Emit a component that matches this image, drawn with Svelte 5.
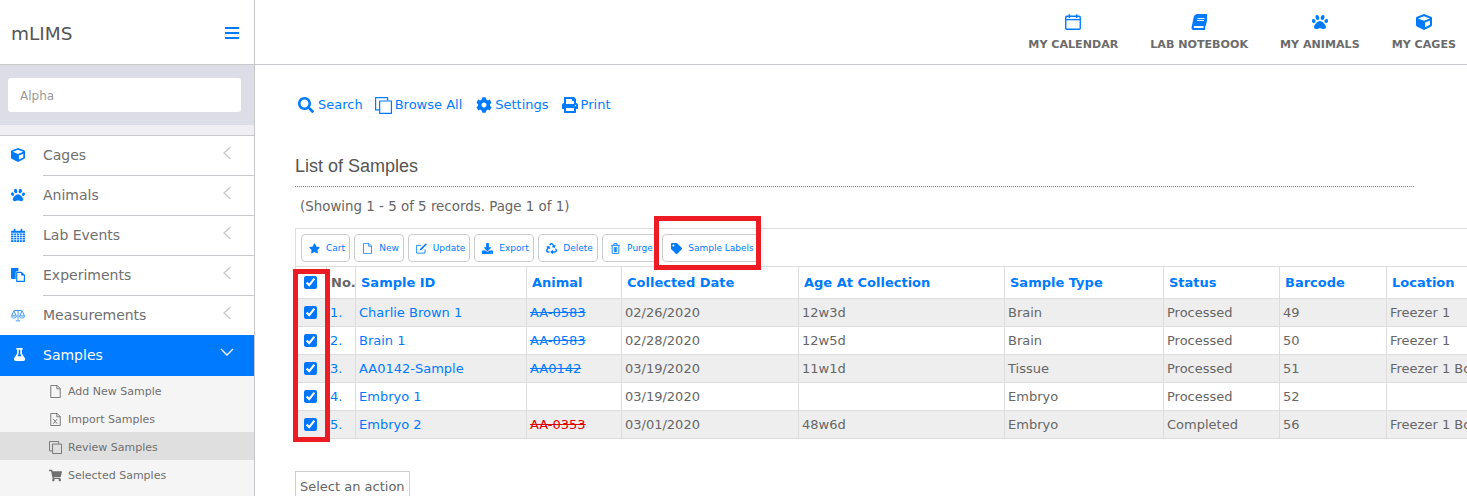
<script>
  const P = {
    search: 'M505 442.7L405.3 343c-4.5-4.5-10.6-7-17-7H372c27.6-35.3 44-79.7 44-128C416 93.1 322.9 0 208 0S0 93.1 0 208s93.1 208 208 208c48.3 0 92.7-16.4 128-44v16.3c0 6.4 2.5 12.5 7 17l99.7 99.7c9.4 9.4 24.6 9.4 33.9 0l28.3-28.3c9.4-9.4 9.4-24.6.1-34zM208 336c-70.7 0-128-57.2-128-128 0-70.7 57.2-128 128-128 70.7 0 128 57.2 128 128 0 70.7-57.2 128-128 128z',
    paw: 'M256 224c-79.41 0-192 122.76-192 200.25 0 34.9 26.81 55.75 71.74 55.75 48.84 0 81.09-25.08 120.26-25.08 39.51 0 71.85 25.08 120.26 25.08 44.93 0 71.74-20.85 71.74-55.75C448 346.76 335.41 224 256 224zm-147.28-12.61c-10.4-34.65-42.44-57.09-71.56-50.13-29.12 6.96-44.29 40.69-33.89 75.34 10.4 34.65 42.44 57.09 71.56 50.13 29.12-6.96 44.29-40.69 33.89-75.34zm84.72-20.78c30.94-8.14 46.42-49.94 34.58-93.36s-46.52-72.01-77.46-63.87-46.42 49.94-34.58 93.36c11.84 43.42 46.51 72.02 77.46 63.87zm281.39-29.34c-29.12-6.96-61.15 15.48-71.56 50.13-10.4 34.65 4.77 68.38 33.89 75.34 29.12 6.96 61.15-15.48 71.56-50.13 10.4-34.65-4.77-68.38-33.89-75.34zm-156.27 29.34c30.94 8.14 65.62-20.45 77.46-63.87 11.84-43.42-3.64-85.21-34.58-93.36s-65.62 20.45-77.46 63.87c-11.84 43.42 3.64 85.22 34.58 93.36z',
    cube: 'M239.1 6.3l-208 78c-18.7 7-31.1 25-31.1 45v225.1c0 18.2 10.3 34.8 26.5 42.9l208 104c13.5 6.8 29.4 6.8 42.9 0l208-104c16.3-8.1 26.5-24.8 26.5-42.9V129.3c0-20-12.4-37.9-31.1-44.9l-208-78C262 2.2 250 2.2 239.1 6.3zM256 68.4l192 72v1.1l-192 78-192-78v-1.1l192-72zm32 356V275.5l160-65v133.9l-160 80z',
    cog: 'M487.4 315.7l-42.6-24.6c4.3-23.2 4.3-47 0-70.2l42.6-24.6c4.9-2.8 7.1-8.6 5.5-14-11.1-35.6-30-67.8-54.7-94.6-3.8-4.1-10-5.1-14.8-2.3L380.8 110c-17.9-15.4-38.5-27.3-60.8-35.1V25.8c0-5.6-3.9-10.5-9.4-11.7-36.7-8.2-74.3-7.8-109.2 0-5.5 1.2-9.4 6.1-9.4 11.7V75c-22.2 7.9-42.8 19.8-60.8 35.1L88.7 85.5c-4.9-2.8-11-1.9-14.8 2.3-24.7 26.7-43.6 58.9-54.7 94.6-1.7 5.4.6 11.2 5.5 14L67.3 221c-4.3 23.2-4.3 47 0 70.2l-42.6 24.6c-4.9 2.8-7.1 8.6-5.5 14 11.1 35.6 30 67.8 54.7 94.6 3.8 4.1 10 5.1 14.8 2.3l42.6-24.6c17.9 15.4 38.5 27.3 60.8 35.1v49.2c0 5.6 3.9 10.5 9.4 11.7 36.7 8.2 74.3 7.8 109.2 0 5.5-1.2 9.4-6.1 9.4-11.7v-49.2c22.2-7.9 42.8-19.8 60.8-35.1l42.6 24.6c4.9 2.8 11 1.9 14.8-2.3 24.7-26.7 43.6-58.9 54.7-94.6 1.5-5.5-.7-11.3-5.6-14.1zM256 336c-44.1 0-80-35.9-80-80s35.9-80 80-80 80 35.9 80 80-35.9 80-80 80z',
    star: 'M259.3 17.8L194 150.2 47.9 171.5c-26.2 3.8-36.7 36.1-17.7 54.6l105.7 103-25 145.5c-4.5 26.3 23.2 46 46.4 33.7L288 439.6l130.7 68.7c23.2 12.2 50.9-7.4 46.4-33.7l-25-145.5 105.7-103c19-18.5 8.5-50.8-17.7-54.6L382 150.2 316.7 17.8c-11.7-23.6-45.6-23.9-57.4 0z',
    tag: 'M0 252.118V48C0 21.49 21.49 0 48 0h204.118a48 48 0 0 1 33.941 14.059l211.882 211.882c18.745 18.745 18.745 49.137 0 67.882L293.823 497.941c-18.745 18.745-49.137 18.745-67.882 0L14.059 286.059A48 48 0 0 1 0 252.118zM112 64c-26.51 0-48 21.49-48 48s21.49 48 48 48 48-21.49 48-48-21.49-48-48-48z',
    cart: 'M528.12 301.319l47.273-208C578.806 78.301 567.391 64 551.99 64H159.208l-9.166-44.81C147.758 8.021 137.93 0 126.529 0H24C10.745 0 0 10.745 0 24v16c0 13.255 10.745 24 24 24h69.883l70.248 343.435C147.325 417.1 136 435.222 136 456c0 30.928 25.072 56 56 56s56-25.072 56-56c0-15.674-6.447-29.835-16.824-40h209.647C430.447 426.165 424 440.326 424 456c0 30.928 25.072 56 56 56s56-25.072 56-56c0-22.172-12.888-41.332-31.579-50.405l5.517-24.276c3.413-15.018-8.002-29.319-23.403-29.319H218.117l-6.545-32h293.145c11.206 0 20.92-7.754 23.403-18.681z',
    download: 'M216 0h80c13.3 0 24 10.7 24 24v168h87.7c17.8 0 26.7 21.5 14.1 34.1L269.7 378.3c-7.5 7.5-19.8 7.5-27.3 0L90.1 226.1c-12.6-12.6-3.7-34.1 14.1-34.1H192V24c0-13.3 10.7-24 24-24zm296 376v112c0 13.3-10.7 24-24 24H24c-13.3 0-24-10.7-24-24V376c0-13.3 10.7-24 24-24h146.7l49 49c20.1 20.1 52.5 20.1 72.6 0l49-49H488c13.3 0 24 10.7 24 24zm-124 88c0-11-9-20-20-20s-20 9-20 20 9 20 20 20 20-9 20-20zm64 0c0-11-9-20-20-20s-20 9-20 20 9 20 20 20 20-9 20-20z',
    print: 'M448 192V77.25c0-8.49-3.37-16.62-9.37-22.63L393.37 9.37c-6-6-14.14-9.37-22.63-9.37H96C78.33 0 64 14.33 64 32v160c-35.35 0-64 28.65-64 64v112c0 8.84 7.16 16 16 16h48v96c0 17.67 14.33 32 32 32h320c17.67 0 32-14.33 32-32v-96h48c8.84 0 16-7.16 16-16V256c0-35.35-28.65-64-64-64zm-64 256H128v-96h256v96zm0-224H128V64h192v48c0 8.84 7.16 16 16 16h48v96zm48 72c-13.25 0-24-10.75-24-24 0-13.26 10.75-24 24-24s24 10.74 24 24c0 13.25-10.75 24-24 24z',
    flask: 'M437.2 403.5L320 215V64h8c13.3 0 24-10.7 24-24V24c0-13.3-10.7-24-24-24H120c-13.3 0-24 10.7-24 24v16c0 13.3 10.7 24 24 24h8v151L10.8 403.5C-18.5 450.6 15.3 512 70.9 512h306.2c55.7 0 89.4-61.5 60.1-108.5zM137.9 320l48.2-77.6c3.7-5.2 5.8-11.6 5.8-18.4V64h64v160c0 6.9 2.2 13.2 5.8 18.4l48.2 77.6h-172z',
    book: 'M448 360V24c0-13.3-10.7-24-24-24H96C43 0 0 43 0 96v320c0 53 43 96 96 96h328c13.3 0 24-10.7 24-24v-16c0-7.5-3.5-14.3-8.9-18.7-4.2-15.4-4.2-59.3 0-74.7 5.4-4.3 8.9-11.1 8.9-18.6zM128 134c0-3.3 2.7-6 6-6h212c3.3 0 6 2.7 6 6v20c0 3.3-2.7 6-6 6H134c-3.3 0-6-2.7-6-6v-20zm0 64c0-3.3 2.7-6 6-6h212c3.3 0 6 2.7 6 6v20c0 3.3-2.7 6-6 6H134c-3.3 0-6-2.7-6-6v-20zm253.4 250H96c-17.7 0-32-14.3-32-32 0-17.6 14.4-32 32-32h285.4c-1.9 17.1-1.9 46.9 0 64z',
    recycle: 'M184.561 261.903c3.232 13.997-12.123 24.635-24.068 17.168l-40.736-25.455-50.867 81.402C55.606 356.273 70.96 384 96.012 384H148c6.627 0 12 5.373 12 12v40c0 6.627-5.373 12-12 12H96.115c-75.334 0-121.302-83.048-81.408-146.88l50.822-81.388-40.725-25.448c-12.081-7.547-8.966-25.961 4.879-29.158l110.237-25.45c8.611-1.988 17.201 3.381 19.189 11.99l25.452 110.237zm98.561-182.915l41.289 66.076-40.74 25.457c-12.051 7.528-9 25.953 4.879 29.158l110.237 25.45c8.672 1.999 17.215-3.438 19.189-11.99l25.45-110.237c3.197-13.844-11.99-24.719-24.068-17.168l-40.687 25.424-41.263-66.082c-37.521-60.033-125.209-60.171-162.816 0l-17.963 28.766c-3.51 5.62-1.8 13.021 3.82 16.533l33.919 21.195c5.62 3.512 13.024 1.803 16.536-3.817l17.961-28.743c12.712-20.341 41.973-19.676 54.257-.022zM497.288 301.12l-27.541-44.101c-3.5-5.605-10.892-7.321-16.51-3.835l-33.925 21.038c-5.629 3.49-7.358 10.88-3.86 16.513l27.575 44.378c13.314 21.326-2.003 49.887-27.14 49.887H320v-48c0-14.216-17.205-21.37-27.313-11.313l-80 80c-6.249 6.248-6.249 16.379 0 22.627l80 80C302.689 517.999 320 510.983 320 496v-48h95.88c75.274 0 121.335-82.997 81.408-146.88z'
  };
  const nav = [
    { label: 'Cages', icon: 'cube' },
    { label: 'Animals', icon: 'paw' },
    { label: 'Lab Events', icon: 'cal' },
    { label: 'Experiments', icon: 'files' },
    { label: 'Measurements', icon: 'scale' }
  ];
  const sub = [
    { label: 'Add New Sample', icon: 'file' },
    { label: 'Import Samples', icon: 'xfile' },
    { label: 'Review Samples', icon: 'copy', active: true },
    { label: 'Selected Samples', icon: 'cart' }
  ];
  const top = [
    { label: 'MY CALENDAR', icon: 'calo' },
    { label: 'LAB NOTEBOOK', icon: 'book' },
    { label: 'MY ANIMALS', icon: 'paw' },
    { label: 'MY CAGES', icon: 'cube' }
  ];
  const tools = [
    { label: 'Cart', icon: 'star', w: 49 },
    { label: 'New', icon: 'file', w: 50 },
    { label: 'Update', icon: 'edit', w: 62 },
    { label: 'Export', icon: 'download', w: 60 },
    { label: 'Delete', icon: 'recycle', w: 60 },
    { label: 'Purge', icon: 'trash', w: 56 },
    { label: 'Sample Labels', icon: 'tag', w: 98 }
  ];
  const cols = ['Sample ID', 'Animal', 'Collected Date', 'Age At Collection', 'Sample Type', 'Status', 'Barcode', 'Location'];
  const widths = [31, 29, 171, 95, 177, 206, 159, 116, 107, 150];
  const rows = [
    { id: 'Charlie Brown 1', animal: 'AA-0583', date: '02/26/2020', age: '12w3d', type: 'Brain', status: 'Processed', code: '49', loc: 'Freezer 1' },
    { id: 'Brain 1', animal: 'AA-0583', date: '02/28/2020', age: '12w5d', type: 'Brain', status: 'Processed', code: '50', loc: 'Freezer 1' },
    { id: 'AA0142-Sample', animal: 'AA0142', date: '03/19/2020', age: '11w1d', type: 'Tissue', status: 'Processed', code: '51', loc: 'Freezer 1 Box A' },
    { id: 'Embryo 1', animal: '', date: '03/19/2020', age: '', type: 'Embryo', status: 'Processed', code: '52', loc: '' },
    { id: 'Embryo 2', animal: 'AA-0353', dead: true, date: '03/01/2020', age: '48w6d', type: 'Embryo', status: 'Completed', code: '56', loc: 'Freezer 1 Box A' }
  ];
</script>

{#snippet icon(name, size)}
  <svg class="ic" width={size} height={size} viewBox={name === 'star' || name === 'cart' ? '0 0 576 512' : name === 'flask' || name === 'book' ? '0 0 448 512' : '0 0 512 512'} aria-hidden="true">
    {#if name === 'book'}
      <path transform="translate(76 0) skewX(-12)" fill="currentColor" d={P.book} />
    {:else if name === 'cal'}
      <path fill="currentColor" d="M24 96h464a24 24 0 0 1 24 24v368a24 24 0 0 1-24 24H24a24 24 0 0 1-24-24V120a24 24 0 0 1 24-24z" />
      <path stroke="#fff" stroke-width="26" fill="none" d="M0 190h512M0 270h512M0 350h512M0 430h512M100 190v322M205 190v322M310 190v322M415 190v322" />
      <rect x="100" y="30" width="60" height="110" rx="26" fill="currentColor" />
      <rect x="352" y="30" width="60" height="110" rx="26" fill="currentColor" />
    {:else if name === 'calo'}
      <rect x="24" y="72" width="464" height="416" rx="36" fill="none" stroke="currentColor" stroke-width="44" />
      <path d="M24 180h464" stroke="currentColor" stroke-width="44" />
      <rect x="112" y="6" width="56" height="120" rx="24" fill="currentColor" />
      <rect x="344" y="6" width="56" height="120" rx="24" fill="currentColor" />
    {:else if name === 'files'}
      <path fill="currentColor" d="M30 0h240v120h-50a50 50 0 0 0-50 50v230H30a30 30 0 0 1-30-30V30A30 30 0 0 1 30 0z" />
      <path fill="none" stroke="currentColor" stroke-width="42" stroke-linejoin="round" d="M210 160h170l110 100v230H210z" />
      <path fill="currentColor" d="M370 140v130h130z" />
    {:else if name === 'scale'}
      <path fill="none" stroke="currentColor" stroke-width="28" stroke-linejoin="round" d="M256 70v360M120 90h272M176 470h160M106 100L20 290h172zM406 100l-86 190h172z" />
      <path fill="none" stroke="currentColor" stroke-width="24" d="M4 290c0 50 46 76 102 76s102-26 102-76M304 290c0 50 46 76 102 76s102-26 102-76" />
    {:else if name === 'file'}
      <path fill="none" stroke="currentColor" stroke-width="36" stroke-linejoin="round" d="M70 18h250l122 122v354H70zM310 18v132h132" />
    {:else if name === 'xfile'}
      <path fill="none" stroke="currentColor" stroke-width="36" stroke-linejoin="round" d="M70 18h250l122 122v354H70zM310 18v132h132" />
      <path fill="none" stroke="currentColor" stroke-width="36" d="M170 240l150 180M320 240L170 420" />
    {:else if name === 'copy'}
      <path fill="none" stroke="currentColor" stroke-width="36" stroke-linejoin="round" d="M140 120h354v374H140z" />
      <path fill="none" stroke="currentColor" stroke-width="36" stroke-linejoin="round" d="M380 110V18H18v370h112" />
    {:else if name === 'edit'}
      <path fill="none" stroke="currentColor" stroke-width="40" stroke-linejoin="round" d="M420 300v170H30V110h210" />
      <path fill="currentColor" d="M460 10l50 50-260 260-80 26 26-76z" />
    {:else if name === 'trash'}
      <path fill="none" stroke="currentColor" stroke-width="42" d="M100 130v340a24 24 0 0 0 24 24h264a24 24 0 0 0 24-24V130M50 110h412M180 100V30h152v70M200 190v240M312 190v240M256 190v240" />
    {:else}
      <path fill="currentColor" d={P[name]} />
    {/if}
  </svg>
{/snippet}

<div class="page">
  <aside class="side">
    <div class="logo">
      <span class="brand">mLIMS</span>
      <span class="burger"><i></i><i></i><i></i></span>
    </div>
    <div class="searchbox"><div class="field">Alpha</div></div>
    <div class="strip"></div>
    <nav>
      {#each nav as n}
        <div class="item">
          <span class="nic">{@render icon(n.icon, 14)}</span>
          <span class="lbl">{n.label}</span>
          <svg class="chev" width="8" height="14" viewBox="0 0 8 14"><path d="M7.5 1L1 7l6.5 6" fill="none" stroke="#c8c8c8" stroke-width="1.3" /></svg>
        </div>
      {/each}
      <div class="item on">
        <span class="nic">{@render icon('flask', 13)}</span>
        <span class="lbl">Samples</span>
        <svg class="chevd" width="14" height="8" viewBox="0 0 14 8"><path d="M1 1l6 6 6-6" fill="none" stroke="#fff" stroke-width="1.4" /></svg>
      </div>
      <div class="subs">
        {#each sub as s}
          <div class="sub" class:act={s.active}>
            <span class="sic">{@render icon(s.icon, 13)}</span><span>{s.label}</span>
          </div>
        {/each}
      </div>
    </nav>
  </aside>

  <div class="right">
    <header>
      {#each top as t}
        <div class="tnav">
          <span class="tic">{@render icon(t.icon, 16)}</span>
          <span>{t.label}</span>
        </div>
      {/each}
    </header>
    <main>
      <div class="links">
        <span class="lnk first">{@render icon('search', 16)}<span class="t">Search</span></span>
        <span class="lnk second">{@render icon('copy', 17)}<span class="t">Browse All</span></span>
        <span class="lnk">{@render icon('cog', 16)}<span class="t">Settings</span></span>
        <span class="lnk">{@render icon('print', 16)}<span class="t">Print</span></span>
      </div>
      <h2>List of Samples</h2>
      <p class="count">(Showing 1 - 5 of 5 records. Page 1 of 1)</p>
      <div class="toolbar">
        {#each tools as t}
          <button style="width:{t.w}px">{@render icon(t.icon, 11)}<span>{t.label}</span></button>
        {/each}
      </div>
      <table>
        <colgroup>
          {#each widths as w}<col style="width:{w}px" />{/each}
        </colgroup>
        <thead>
          <tr>
            <th class="cb"><input type="checkbox" checked /></th>
            <th class="no">No.</th>
            {#each cols as c}<th>{c}</th>{/each}
            <th></th>
          </tr>
        </thead>
        <tbody>
          {#each rows as r, i}
            <tr>
              <td class="cb"><input type="checkbox" checked /></td>
              <td class="num">{i + 1}.</td>
              <td class="link">{r.id}</td>
              <td class="link strike" class:dead={r.dead}>{r.animal}</td>
              <td>{r.date}</td>
              <td>{r.age}</td>
              <td>{r.type}</td>
              <td>{r.status}</td>
              <td>{r.code}</td>
              <td class="loc" colspan="2">{r.loc}</td>
            </tr>
          {/each}
        </tbody>
      </table>
      <div class="action">Select an action</div>
    </main>
    <div class="mark mark-a"></div>
    <div class="mark mark-b"></div>
  </div>
</div>

<style>
  :global(body) { margin: 0; overflow: hidden; background: #fff; }
  .page { display: flex; width: 1467px; height: 496px; overflow: hidden; font-family: "DejaVu Sans", Verdana, sans-serif; color: #666; }
  .ic { display: block; flex: none; }

  .side { width: 254px; flex: none; border-right: 1px solid #c8c8cc; }
  .logo { height: 62px; border-bottom: 1px solid #c8c8cc; display: flex; align-items: center; justify-content: space-between; padding: 2px 15px 0 11px; }
  .brand { font-size: 18.5px; color: #555; }
  .burger { display: flex; flex-direction: column; gap: 3px; width: 14px; }
  .burger i { display: block; height: 2px; background: #007bff; }
  .searchbox { height: 60px; background: #dcdde6; padding: 13px 13px 13px 8px; box-sizing: border-box; }
  .field { height: 34px; background: #fff; border-radius: 3px; font-size: 12px; color: #999; line-height: 37px; padding-left: 12px; }
  .strip { height: 11px; box-sizing: border-box; background: #eeeef3; border-bottom: 1px solid #c8c8cc; }

  .item { height: 40px; display: flex; align-items: center; position: relative; font-size: 14px; color: #707070; }
  .item:nth-child(5) { height: 39px; }
  .item .nic { width: 43px; padding: 0 0 2px 11px; box-sizing: border-box; color: #007bff; flex: none; }
  .item .lbl { flex: 1; align-self: stretch; display: flex; align-items: center; border-bottom: 1px solid #c8c8cc; padding-bottom: 1px; box-sizing: border-box; }
  .item:nth-child(5) .lbl { border-bottom: 0; }
  .chev { position: absolute; right: 23px; top: 10px; }
  .chevd { position: absolute; right: 20px; top: 13px; }
  .item.on { background: #007bff; color: #fff; height: 41px; }
  .item.on .nic { color: #fff; padding-left: 13px; }
  .item.on .lbl { border: 0; }
  .subs { background: #f5f5f5; height: 120px; }
  .sub { height: 28px; display: flex; align-items: center; font-size: 11px; color: #707070; padding: 3px 0 0 49px; box-sizing: border-box; }
  .sub.act { background: #dfdfdf; }
  .sic { width: 19px; flex: none; }

  .right { flex: 1; min-width: 0; position: relative; }
  header { height: 64px; border-bottom: 1px solid #c8c8cc; display: flex; justify-content: flex-end; gap: 32px; padding-right: 11px; }
  .tnav { display: flex; flex-direction: column; align-items: center; font-size: 11.1px; font-weight: 700; color: #6b6b6b; padding-top: 14px; white-space: nowrap; }
  .tic { color: #007bff; height: 24px; }

  main { padding: 32px 0 0 40px; }
  .links { display: flex; align-items: center; gap: 13px; height: 16px; padding-left: 3px; }
  .lnk { display: flex; align-items: center; gap: 3px; color: #007bff; font-size: 13px; }
  .lnk.first { gap: 4px; margin-right: -1px; }
  .lnk.second { margin-right: 1px; }
  .t { margin-top: -2px; }
  h2 { margin: 43px 0 0; font: 400 18px/20px "Liberation Sans", Arial, sans-serif; color: #555; height: 30px; width: 1119px; border-bottom: 1px dotted #888; }
  .count { margin: 12px 0 0 5px; font-size: 13.4px; line-height: 16px; color: #666; }
  .toolbar { margin-top: 13px; border-top: 1px solid #ddd; border-left: 1px solid #ddd; height: 38px; display: flex; gap: 4px; padding: 5px 0 0 5px; box-sizing: border-box; }
  button { height: 28px; flex: none; border: 1px solid #ccc; border-radius: 4px; background: #fff; color: #007bff; display: flex; align-items: center; justify-content: center; gap: 6px; font: 9px "DejaVu Sans", Verdana, sans-serif; padding: 0 0 0 3px; white-space: nowrap; }
  table { border-collapse: collapse; table-layout: fixed; width: 1241px; font-size: 13px; }
  th, td { border: 1px solid #ddd; text-align: left; padding: 0 0 0 3px; white-space: nowrap; overflow: hidden; }
  thead tr { height: 32px; }
  tbody tr { height: 28px; }
  tbody tr:nth-child(odd) { background: #eee; }
  th { color: #007bff; font-weight: 700; padding-left: 5px; }
  th.no { color: #666; padding-left: 4px; }
  td { color: #666; }
  .num, .link { color: #007bff; }
  .strike { text-decoration: line-through; }
  .dead { color: #e00000; }
  th.cb, td.cb { padding: 0 2px 0 0; text-align: center; }
  input { margin: 0 0 2px; width: 13px; height: 13px; display: inline-block; vertical-align: middle; accent-color: #0075ff; }
  .action { margin-top: 32px; width: 115px; height: 40px; border: 1px solid #ccc; padding: 7px 0 0 4px; box-sizing: border-box; font-size: 13px; color: #666; white-space: nowrap; }

  .mark { position: absolute; border: 5px solid #ed1c24; box-sizing: border-box; pointer-events: none; }
  .mark-a { left: 399px; top: 216px; width: 107px; height: 54px; }
  .mark-b { left: 38px; top: 269px; width: 37px; height: 173px; }
</style>
